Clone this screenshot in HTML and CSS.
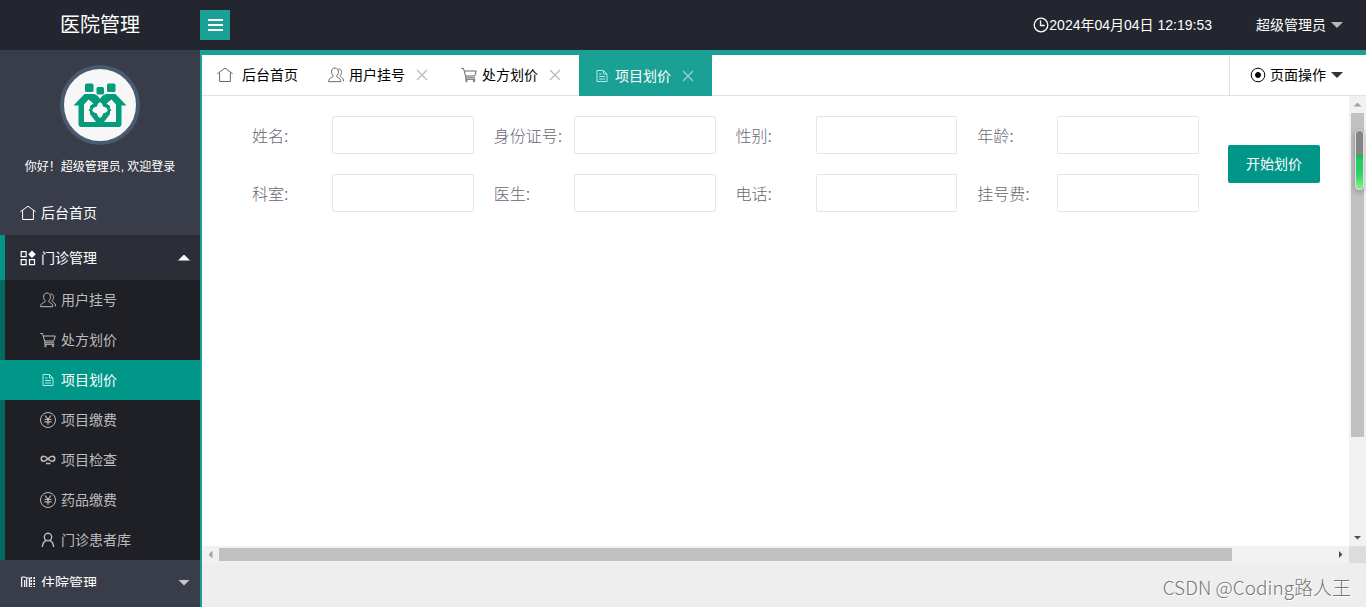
FILE: index.html
```html
<!DOCTYPE html>
<html lang="zh-CN">
<head>
<meta charset="utf-8">
<title>医院管理</title>
<link rel="stylesheet" href="styles.css">
</head>
<body>
<svg class="sprite" aria-hidden="true">
  <symbol id="home" viewBox="0 0 16 16"><path d="M.4 6.7 8 1.2l7.6 5.5M2.6 5.4v9.1h10.8V5.4"/></symbol>
  <symbol id="users" viewBox="0 0 16 16"><path d="M5.200 8.800C2.600 6.500 3 1 7 1s4.400 5.500 1.800 7.800c-.4 1 .3 1.200 1.500 1.900 1.800 1 2.500 1.800 2.500 4H.6c0-2.200.8-3 2.700-4 1.300-.7 2.200-.9 1.900-1.900zM10.500 2c3.300-.3 4 4.200 1.700 6.400-.3 1 .3 1.200 1.200 1.900 1.500 1 2.200 2 2.200 4"/></symbol>
  <symbol id="cart" viewBox="0 0 16 16"><path d="M.3 1.500h2.200l2.600 9.300h9M3.500 4h11.700l-1.500 5H4.800M5 10.800l-.5 1.500h9.800"/><circle cx="5.500" cy="14" r=".8"/><circle cx="13" cy="14" r=".8"/></symbol>
  <symbol id="file" viewBox="0 0 16 16"><path d="M3 2.500h6.500l3.500 3.500v7.500H3zM9.500 2.500V6H13M5 6h2.500M5 8.500h6M5 11h6"/></symbol>
  <symbol id="yen" viewBox="0 0 16 16"><circle cx="8" cy="8" r="7.500"/><path stroke-width="1.200" d="M5 3.500 8 7.300l3-3.800M4.500 7.500h7M4.500 9.800h7M8 7.300v5.400"/></symbol>
  <symbol id="loop" viewBox="0 0 16 16"><path stroke-width="1.500" d="M8 7C6.500 5.300 5.300 4.300 3.700 4.300a2.400 2.400 0 0 0 0 4.900C6.700 9.200 9 4.300 12.300 4.300a2.400 2.400 0 0 1 0 4.900C10.700 9.200 9.400 8.400 8 7M6 11.600h4.500"/></symbol>
  <symbol id="person" viewBox="0 0 16 16"><g stroke-width="1.400"><circle cx="8" cy="5" r="3.700"/><path d="M2.300 15c.3-3.600 2.200-5.800 4-6.600M13.700 15c-.3-3.600-2.200-5.800-4-6.600"/></g></symbol>
  <symbol id="grid" viewBox="0 0 16 16"><g stroke-width="1.200"><path d="M1.200 1.700h4.900v5H1.200zM1.200 9.700h4.900v5H1.200zM9.500 9.700h5v5h-5z"/><path fill="currentColor" d="m12 1.300 2.900 2.900L12 7.100 9.100 4.200z"/></g></symbol>
  <symbol id="ward" viewBox="0 0 16 16"><path stroke-width="1.200" d="M1.700 2v12M1.700 2h3l2 1V14L4.700 13H1.700M4.700 5v8M7.500 3h2v9"/><path stroke-width="1.500" stroke-dasharray="2 1" d="M11.200 2v11M14.200 2v11"/></symbol>
  <symbol id="clock" viewBox="0 0 16 16"><g stroke-width="1.300"><circle cx="8" cy="8" r="6.800"/><path d="M7.500 3.500v5h4.200"/></g></symbol>
  <symbol id="close" viewBox="0 0 12 12"><path stroke-width="1.300" d="m1 1 10 10M11 1 1 11"/></symbol>
  <symbol id="target" viewBox="0 0 16 16"><circle cx="8" cy="8" r="6.800"/><circle cx="8" cy="8" r="2.500" fill="currentColor"/></symbol>
</svg>

<header class="header">
  <h1 class="brand">医院管理</h1>
  <button class="toggle" type="button" aria-label="切换菜单"><span class="bar"></span><span class="bar"></span><span class="bar"></span></button>
  <div class="clock"><svg class="icon"><use href="#clock"/></svg><time>2024年04月04日 12:19:53</time></div>
  <button class="account" type="button">超级管理员<span class="caret"></span></button>
</header>

<div class="body">
  <aside class="sidebar">
    <div class="profile">
      <svg class="avatar" viewBox="0 0 80 80" role="img" aria-label="头像">
        <circle cx="40" cy="40" r="38" fill="#f7f7f7" stroke="#475a6e" stroke-width="4"/>
        <g fill="#059c7c">
          <rect x="25" y="18.500" width="8.500" height="8.500" rx="1.500"/>
          <rect x="36.500" y="22" width="7.500" height="7.500" rx="1.500"/>
          <rect x="47" y="18.500" width="8.500" height="8.500" rx="1.500"/>
          <path d="M24.500 29H34q4 1 6 5 2-4 6-5h9.500L66.500 40.500H61.500V59q0 3-3 3H21.500q-3 0-3-3V40.500H13.500z"/>
        </g>
        <path fill="#f7f7f7" d="m28.500 34.500-4.500 5V57h12l-6-8v-8l3.500-2.500zM51.500 34.500l4.500 5V57H44l6-8v-8l-3.500-2.500z"/>
        <path fill="#f7f7f7" stroke="#059c7c" stroke-width="2.500" stroke-linejoin="round" d="M40 36q3 0 4 4.500 5 1 5 4.500t-5 4.500q-1 4.500-4 4.500t-4-4.500q-5-1-5-4.500t5-4.500q1-4.500 4-4.500z"/>
        <path fill="none" stroke="#059c7c" stroke-width="2" d="m40 35 10 10-10 10-10-10z"/>
        <path fill="#f7f7f7" d="M38.200 39.500h3.600v3.700h3.700v3.600h-3.700v3.700h-3.600v-3.700h-3.700v-3.600h3.700z"/>
      </svg>
      <p class="greeting">你好！超级管理员, 欢迎登录</p>
    </div>
    <nav class="nav">
      <a class="nav-item" href="#"><svg class="icon"><use href="#home"/></svg>后台首页</a>
      <a class="nav-item nav-open" href="#"><svg class="icon"><use href="#grid"/></svg>门诊管理<span class="caret caret-up"></span></a>
      <div class="subnav">
        <a class="sub-item" href="#"><svg class="icon"><use href="#users"/></svg>用户挂号</a>
        <a class="sub-item" href="#"><svg class="icon"><use href="#cart"/></svg>处方划价</a>
        <a class="sub-item sub-active" href="#"><svg class="icon"><use href="#file"/></svg>项目划价</a>
        <a class="sub-item" href="#"><svg class="icon"><use href="#yen"/></svg>项目缴费</a>
        <a class="sub-item" href="#"><svg class="icon"><use href="#loop"/></svg>项目检查</a>
        <a class="sub-item" href="#"><svg class="icon"><use href="#yen"/></svg>药品缴费</a>
        <a class="sub-item" href="#"><svg class="icon"><use href="#person"/></svg>门诊患者库</a>
      </div>
      <a class="nav-item" href="#"><svg class="icon"><use href="#ward"/></svg>住院管理<span class="caret"></span></a>
    </nav>
  </aside>

  <main class="main">
    <div class="tabs">
      <div class="tab tab-home"><a class="tab-link" href="#"><svg class="icon"><use href="#home"/></svg>后台首页</a></div>
      <div class="tab"><a class="tab-link" href="#"><svg class="icon"><use href="#users"/></svg>用户挂号</a><button class="tab-close" type="button" aria-label="关闭"><svg><use href="#close"/></svg></button></div>
      <div class="tab"><a class="tab-link" href="#"><svg class="icon"><use href="#cart"/></svg>处方划价</a><button class="tab-close" type="button" aria-label="关闭"><svg><use href="#close"/></svg></button></div>
      <div class="tab tab-active"><a class="tab-link" href="#"><svg class="icon"><use href="#file"/></svg>项目划价</a><button class="tab-close" type="button" aria-label="关闭"><svg><use href="#close"/></svg></button></div>
      <button class="page-ops" type="button"><svg class="icon"><use href="#target"/></svg>页面操作<span class="caret"></span></button>
    </div>

    <div class="frame">
      <form class="form">
        <div class="fields">
          <div class="field"><label for="name">姓名:</label><input id="name" type="text"></div>
          <div class="field"><label for="idcard">身份证号:</label><input id="idcard" type="text"></div>
          <div class="field"><label for="sex">性别:</label><input id="sex" type="text"></div>
          <div class="field"><label for="age">年龄:</label><input id="age" type="text"></div>
          <div class="field"><label for="dept">科室:</label><input id="dept" type="text"></div>
          <div class="field"><label for="doctor">医生:</label><input id="doctor" type="text"></div>
          <div class="field"><label for="phone">电话:</label><input id="phone" type="text"></div>
          <div class="field"><label for="fee">挂号费:</label><input id="fee" type="text"></div>
        </div>
        <button class="submit" type="button">开始划价</button>
      </form>
      <div class="scroll scroll-y"><span class="arrow arrow-up"></span><span class="track"><span class="thumb"></span></span><span class="arrow arrow-down"></span></div>
      <div class="scroll scroll-x"><span class="arrow arrow-left"></span><span class="track"><span class="thumb"></span></span><span class="arrow arrow-right"></span></div>
      <div class="corner"></div>
      <div class="gauge"></div>
    </div>
    <footer class="footer">CSDN @Coding路人王</footer>
  </main>
</div>
</body>
</html>
```

FILE: styles.css
```css
:root {
  --teal: #1aa094;
  --green: #009688;
  --dark: #23262e;
  --side: #393d49;
}

* { box-sizing: border-box; }

body {
  display: flex;
  flex-direction: column;
  height: 100vh;
  margin: 0;
  overflow: hidden;
  font: 14px/20px "Liberation Sans", "Noto Sans CJK SC", sans-serif;
  color: #000;
}

a { color: inherit; text-decoration: none; }
button { padding: 0; border: 0; background: none; color: inherit; font: inherit; cursor: pointer; }
.sprite { position: absolute; width: 0; height: 0; }
symbol, .icon, .tab-close svg { fill: none; stroke: currentColor; }
.icon { flex: none; width: 16px; height: 16px; }

.caret {
  width: 12px;
  height: 6px;
  background: currentColor;
  clip-path: polygon(0 0, 100% 0, 50% 100%);
}
.caret-up { clip-path: polygon(50% 0, 100% 100%, 0 100%); }

.header {
  display: flex;
  flex: none;
  align-items: center;
  height: 50px;
  padding-right: 23px;
  background: var(--dark);
  color: #fff;
}
.brand { width: 200px; margin: 0; font-size: 20px; font-weight: 400; text-align: center; }
.toggle {
  display: flex;
  flex-direction: column;
  align-items: center;
  justify-content: center;
  gap: 3px;
  width: 30px;
  height: 30px;
  background: var(--teal);
}
.bar { width: 15px; height: 2px; background: #fff; }
.clock { display: flex; align-items: center; margin-left: auto; }
.account { display: flex; align-items: center; gap: 5px; margin-left: 44px; }
.account .caret { background: #b7b8ba; }

.body { display: flex; flex: 1; min-height: 0; }

.sidebar {
  display: flex;
  flex: none;
  flex-direction: column;
  width: 200px;
  padding-bottom: 20px;
  background: var(--side);
  color: #fff;
}
.profile {
  display: flex;
  flex: none;
  flex-direction: column;
  align-items: center;
  gap: 12px;
  height: 140px;
  padding-top: 15px;
}
.avatar { width: 80px; height: 80px; }
.greeting { margin: 0; font-size: 12px; white-space: nowrap; }
.nav { flex: 1; min-height: 0; overflow: hidden; }
.nav-item {
  display: flex;
  align-items: center;
  gap: 5px;
  height: 45px;
  padding: 0 10px 0 20px;
}
.nav-item .caret { margin-left: auto; background: #c4c5c8; }
.nav-item .caret-up { background: #fff; }
.nav-open { padding-left: 15px; border-left: 5px solid var(--green); background: #2b2e37; }
.subnav { border-left: 5px solid #006a60; background: #1f2025; color: #bcbcbe; }
.sub-item { display: flex; align-items: center; gap: 5px; height: 40px; padding-left: 35px; }
.sub-active { margin-left: -5px; padding-left: 40px; background: var(--green); color: #fff; }
.sub-active .icon { color: #a5f0ea; }

.main {
  display: flex;
  flex: 1;
  flex-direction: column;
  min-width: 0;
  border-top: 5px solid var(--teal);
  border-left: 2px solid var(--teal);
  background: #fff;
}
.tabs { display: flex; flex: none; height: 41px; border-bottom: 1px solid #e2e2e2; }
.tab { display: flex; align-items: center; gap: 11px; padding: 0 18px 0 15px; }
.tab-home { padding-right: 15px; }
.tab-link { display: flex; align-items: center; gap: 5px; }
.tab-home .tab-link { gap: 9px; }
.tab .icon { color: #666670; }
.tab-close { display: flex; color: #bbb; }
.tab-close svg { width: 12px; height: 12px; }
.tab-active { height: 41px; background: var(--teal); color: #fff; }
.tab-active .icon { color: #a5f0ea; }
.tab-active .tab-close { color: #9dd6d1; }
.page-ops {
  display: flex;
  align-items: center;
  gap: 4px;
  margin-left: auto;
  padding: 0 23px 0 20px;
  border-left: 1px solid #e2e2e2;
}
.page-ops .caret { margin-left: 1px; background: #333; }

.frame {
  position: relative;
  display: grid;
  flex: 1;
  grid-template: minmax(0, 1fr) 17px / minmax(0, 1fr) 17px;
  min-height: 0;
}
.form {
  display: flex;
  grid-area: 1 / 1;
  align-items: flex-start;
  gap: 29px;
  padding: 20px 29px 0 50px;
}
.fields {
  display: grid;
  flex: 1;
  grid-template-columns: repeat(4, minmax(0, 1fr));
  gap: 20px;
  min-width: 0;
}
.field { display: flex; align-items: center; }
.field label {
  flex: none;
  width: 80px;
  padding-top: 4px;
  color: #686872;
  font-size: 16px;
  font-weight: 300;
}
.field input {
  flex: 1;
  width: 100%;
  min-width: 0;
  height: 38px;
  padding: 0 10px;
  border: 1px solid #e6e6e6;
  border-radius: 2px;
  background: #fff;
  font: inherit;
}
.submit {
  flex: none;
  width: 92px;
  height: 38px;
  margin-top: 29px;
  border-radius: 2px;
  background: var(--green);
  color: #fff;
}

.scroll { display: flex; background: #f1f1f1; }
.scroll-y { grid-area: 1 / 2; flex-direction: column; }
.scroll-x { grid-area: 2 / 1; }
.track { flex: 1; padding: 0 2px; }
.scroll-x .track { padding: 2px 0; }
.thumb { display: block; height: 78%; background: #c1c1c1; }
.scroll-x .thumb { width: 91%; height: 100%; }
.arrow { display: flex; flex: none; align-items: center; justify-content: center; width: 17px; height: 17px; color: #505050; }
.arrow::before { width: 8px; height: 4px; background: currentColor; content: ""; }
.arrow-up, .arrow-left { color: #a3a3a3; }
.arrow-up::before { clip-path: polygon(50% 0, 100% 100%, 0 100%); }
.arrow-down::before { clip-path: polygon(0 0, 100% 0, 50% 100%); }
.arrow-left::before { width: 4px; height: 8px; clip-path: polygon(100% 0, 100% 100%, 0 50%); }
.arrow-right::before { width: 4px; height: 8px; clip-path: polygon(0 0, 100% 50%, 0 100%); }
.corner { grid-area: 2 / 2; background: #dcdcdc; }
.gauge {
  position: absolute;
  top: 34px;
  right: 2px;
  width: 9px;
  height: 60px;
  border: 1px solid #ddd;
  border-radius: 4px;
  background: linear-gradient(#858585 42%, #16b65a 42%, #22cb67 50%, #2fd36a 75%, #83f683);
  box-shadow: 0 2px 6px rgba(0, 0, 0, .3);
}

.footer {
  flex: none;
  height: 44px;
  padding: 10px 15px 0 0;
  background: #eee;
  color: #777;
  font: 300 19px/28px "Noto Sans CJK SC", sans-serif;
  text-align: right;
  text-shadow: 1px 1px 0 #fff;
}
```
